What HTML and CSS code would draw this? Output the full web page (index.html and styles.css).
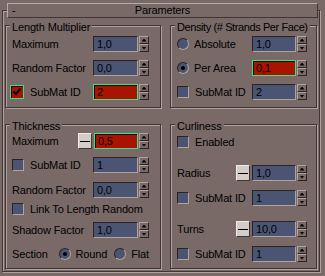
FILE: index.html
```html
<!DOCTYPE html>
<html lang="en">
<head>
  <meta charset="UTF-8" />
  <title>Parameters</title>
  <link rel="stylesheet" href="styles.css">
</head>
<body>
  <div class="rollout">
    <div class="rollout-title">
      <span class="toggle">-</span>
      <span class="title-text">Parameters</span>
    </div>

    <div class="groups">
      <!-- Length Multiplier -->
      <div class="group group-left">
        <div class="legend">Length Multiplier</div>
        <div class="row first">
          <span class="label">Maximum</span>
          <div class="ctrl"><div class="field">1,0</div><div class="arrows"><span class="up"></span><span class="down"></span></div></div>
        </div>
        <div class="row">
          <span class="label">Random Factor</span>
          <div class="ctrl"><div class="field">0,0</div><div class="arrows"><span class="up"></span><span class="down"></span></div></div>
        </div>
        <div class="row">
          <span class="check on focus"><svg width="10" height="10" viewBox="0 0 10 10"><path d="M1.5 4.5 L4 7 L8.5 1.5" fill="none" stroke="#000" stroke-width="2"/></svg></span>
          <span class="label after-box">SubMat ID</span>
          <div class="ctrl"><div class="field hot">2</div><div class="arrows"><span class="up"></span><span class="down"></span></div></div>
        </div>
      </div>

      <!-- Density -->
      <div class="group group-right">
        <div class="legend narrow">Density (# Strands Per Face)</div>
        <div class="row first">
          <span class="radio"></span>
          <span class="label after-radio">Absolute</span>
          <div class="ctrl"><div class="field">1,0</div><div class="arrows"><span class="up"></span><span class="down"></span></div></div>
        </div>
        <div class="row">
          <span class="radio on"></span>
          <span class="label after-radio">Per Area</span>
          <div class="ctrl"><div class="field hot">0,1</div><div class="arrows"><span class="up"></span><span class="down"></span></div></div>
        </div>
        <div class="row">
          <span class="check"></span>
          <span class="label after-box">SubMat ID</span>
          <div class="ctrl"><div class="field">2</div><div class="arrows"><span class="up"></span><span class="down"></span></div></div>
        </div>
      </div>

      <!-- Thickness -->
      <div class="group group-left">
        <div class="legend">Thickness</div>
        <div class="row flush">
          <span class="label">Maximum</span>
          <div class="ctrl"><span class="minus"></span><div class="field hot">0,5</div><div class="arrows"><span class="up"></span><span class="down"></span></div></div>
        </div>
        <div class="row">
          <span class="check"></span>
          <span class="label after-box">SubMat ID</span>
          <div class="ctrl"><div class="field">1</div><div class="arrows"><span class="up"></span><span class="down"></span></div></div>
        </div>
        <div class="row loose">
          <span class="label">Random Factor</span>
          <div class="ctrl"><div class="field">0,0</div><div class="arrows"><span class="up"></span><span class="down"></span></div></div>
        </div>
        <div class="row tight">
          <span class="check"></span>
          <span class="label after-box">Link To Length Random</span>
        </div>
        <div class="row near">
          <span class="label">Shadow Factor</span>
          <div class="ctrl"><div class="field">1,0</div><div class="arrows"><span class="up"></span><span class="down"></span></div></div>
        </div>
        <div class="row">
          <span class="label section-label">Section</span>
          <span class="radio on"></span>
          <span class="label after-radio">Round</span>
          <span class="radio flat-radio"></span>
          <span class="label after-radio">Flat</span>
        </div>
      </div>

      <!-- Curliness -->
      <div class="group group-right">
        <div class="legend">Curliness</div>
        <div class="row first-curl">
          <span class="check"></span>
          <span class="label after-box">Enabled</span>
        </div>
        <div class="row spaced">
          <span class="label">Radius</span>
          <div class="ctrl"><span class="minus"></span><div class="field">1,0</div><div class="arrows"><span class="up"></span><span class="down"></span></div></div>
        </div>
        <div class="row loose">
          <span class="check"></span>
          <span class="label after-box">SubMat ID</span>
          <div class="ctrl"><div class="field">1</div><div class="arrows"><span class="up"></span><span class="down"></span></div></div>
        </div>
        <div class="row spaced">
          <span class="label">Turns</span>
          <div class="ctrl"><span class="minus"></span><div class="field">10,0</div><div class="arrows"><span class="up"></span><span class="down"></span></div></div>
        </div>
        <div class="row loose">
          <span class="check"></span>
          <span class="label after-box">SubMat ID</span>
          <div class="ctrl"><div class="field">1</div><div class="arrows"><span class="up"></span><span class="down"></span></div></div>
        </div>
      </div>
    </div>
  </div>
</body>
</html>
```

FILE: styles.css
```css
body {
  margin: 0;
  width: 325px;
  height: 276px;
  overflow: hidden;
  background: #7a6a67;
  color: #000;
  font-family: "Liberation Sans", Arial, sans-serif;
  font-size: 11px;
  line-height: 13px;
  letter-spacing: -0.15px;
}

/* Rollout frame */
.rollout {
  margin: 10px 0 0 2px;
  width: 318px;
  height: 262px;
  box-sizing: border-box;
  border: 1px solid #3f3533;
  box-shadow: inset 1px 1px 0 #b0a29e, 1px 1px 0 #b0a29e;
}

.rollout-title {
  margin: -8px 0 0 4px;
  width: 311px;
  height: 15px;
  box-sizing: border-box;
  border: 1px solid;
  border-color: #b8aaa6 #3f3533 #3f3533 #b8aaa6;
  background: #7a6a67;
  display: grid;
  grid-template-columns: 1fr auto 1fr;
  align-items: center;
}

.toggle {
  padding-left: 4px;
}

/* Group boxes */
.groups {
  margin: 7px 0 0 2px;
  display: grid;
  grid-template-columns: 156px 147px;
  grid-template-rows: 83px 145px;
  column-gap: 9px;
  row-gap: 16px;
}

.group {
  box-sizing: border-box;
  border: 1px solid #3f3533;
  box-shadow: inset 1px 1px 0 #b0a29e, 1px 1px 0 #b0a29e;
  display: flex;
  flex-direction: column;
  padding-left: 6px;
}

.group-left { padding-right: 11px; }
.group-right { padding-right: 9px; }

.legend {
  align-self: flex-start;
  margin: -5px 0 0 -2px;
  padding: 0 2px;
  background: #7a6a67;
  white-space: nowrap;
}

.legend.narrow {
  margin-right: -20px;
  letter-spacing: -0.4px;
}

/* Rows */
.row {
  display: flex;
  align-items: center;
  height: 16px;
  margin-top: 8px;
  white-space: nowrap;
}

.row.first { margin-top: 2px; }
.row.flush { margin-top: 0; }
.row.first-curl { margin-top: 1px; }
.row.loose { margin-top: 9px; }
.row.tight { margin-top: 3px; }
.row.near { margin-top: 5px; }
.row.spaced { margin-top: 15px; }

.label.after-box { margin-left: 6px; }
.label.after-radio { margin-left: 5px; }
.section-label { width: 50px; }
.flat-radio { margin-left: 7px; }

/* Spinner controls */
.ctrl {
  margin-left: auto;
  display: flex;
  align-items: center;
}

.field {
  width: 44px;
  height: 16px;
  box-sizing: border-box;
  padding-left: 3px;
  line-height: 14px;
  background: #4b5573;
  border: 1px solid;
  border-color: #2a2322 #b0a29e #b0a29e #2a2322;
}

.group-left .ctrl > .field:first-child { width: 45px; }

.field.hot {
  background: #a81400;
  border-color: #3ce08c;
  box-shadow: inset 1px 1px 0 #2a0800;
}

.arrows {
  margin-left: 1px;
  width: 10px;
  height: 16px;
  display: flex;
  flex-direction: column;
}

.arrows span {
  flex: 1;
  box-sizing: border-box;
  border: 1px solid;
  border-color: #b0a29e #2a2322 #2a2322 #b0a29e;
  background: #7a6a67;
  display: flex;
  align-items: center;
  justify-content: center;
}

.arrows span::after {
  content: "";
  width: 5px;
  height: 3px;
  background: #000;
}

.arrows .up::after { clip-path: polygon(50% 0, 100% 100%, 0 100%); }
.arrows .down::after { clip-path: polygon(0 0, 100% 0, 50% 100%); }

.minus {
  width: 14px;
  height: 16px;
  margin-right: 2px;
  box-sizing: border-box;
  border: 1px solid;
  border-color: #f0ebe9 #3f3533 #3f3533 #f0ebe9;
  background: #d3ccc9;
  display: flex;
  align-items: center;
  justify-content: center;
}

.minus::after {
  content: "";
  width: 10px;
  height: 1px;
  background: #000;
}

/* Checkboxes and radios */
.check {
  flex: none;
  width: 12px;
  height: 12px;
  box-sizing: border-box;
  background: #4b5573;
  border: 1px solid;
  border-color: #2a2322 #b0a29e #b0a29e #2a2322;
}

.check.focus {
  width: 14px;
  height: 14px;
  margin-left: -2px;
  background: #a81400;
  border-color: #3ce08c;
  box-shadow: inset 1px 1px 0 #2a0800;
  display: flex;
  align-items: center;
  justify-content: center;
}

.radio {
  flex: none;
  width: 12px;
  height: 12px;
  box-sizing: border-box;
  border-radius: 50%;
  background: #4b5573;
  border: 1px solid;
  border-color: #2a2322 #b0a29e #b0a29e #2a2322;
  display: flex;
  align-items: center;
  justify-content: center;
}

.radio.on::after {
  content: "";
  width: 4px;
  height: 4px;
  border-radius: 50%;
  background: #000;
}
```
